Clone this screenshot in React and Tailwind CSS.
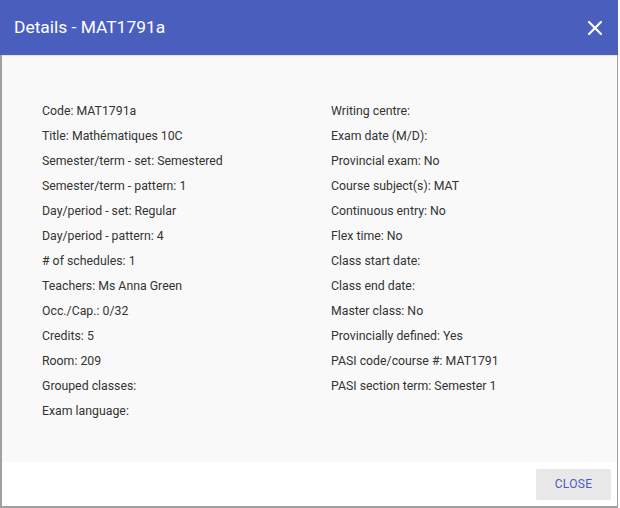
export default function App() {
  const left = [
    "Code: MAT1791a",
    "Title: Mathématiques 10C",
    "Semester/term - set: Semestered",
    "Semester/term - pattern: 1",
    "Day/period - set: Regular",
    "Day/period - pattern: 4",
    "# of schedules: 1",
    "Teachers: Ms Anna Green",
    "Occ./Cap.: 0/32",
    "Credits: 5",
    "Room: 209",
    "Grouped classes:",
    "Exam language:",
  ];
  const right = [
    "Writing centre:",
    "Exam date (M/D):",
    "Provincial exam: No",
    "Course subject(s): MAT",
    "Continuous entry: No",
    "Flex time: No",
    "Class start date:",
    "Class end date:",
    "Master class: No",
    "Provincially defined: Yes",
    "PASI code/course #: MAT1791",
    "PASI section term: Semester 1",
  ];
  return (
    <div className="w-[620px] h-[508px] bg-white" style={{ fontFamily: "Roboto, 'Liberation Sans', sans-serif" }}>
      <div className="w-[618px] h-[508px] flex flex-col border-l-2 border-r border-b-2 border-[#a0a0a0] bg-white">
        <div className="h-[55px] -ml-[2px] w-[618px] bg-[#4a5ebe] flex items-center justify-between pl-[14px] pr-[16px] shrink-0">
          <span className="text-white text-[17.4px]">Details - MAT1791a</span>
          <svg width="14" height="14" viewBox="0 0 14 14">
            <path d="M1 1 L13 13 M13 1 L1 13" stroke="white" strokeWidth="2.2" strokeLinecap="square" />
          </svg>
        </div>
        <div className="h-[407px] bg-[#f9f9f9] border-t border-[#e4e6ee] shrink-0 pl-[40px] pt-[43px] flex text-[12.3px] text-[#333]">
          <div className="w-[289px] flex flex-col">
            {left.map((t) => (
              <div key={t} className="h-[25px] leading-[25px]">{t}</div>
            ))}
          </div>
          <div className="flex flex-col">
            {right.map((t) => (
              <div key={t} className="h-[25px] leading-[25px]">{t}</div>
            ))}
          </div>
        </div>
        <div className="flex-1 flex items-center justify-end pr-[6px]">
          <button className="w-[75px] h-[31px] bg-[#e8e8e8] rounded-[2px] text-[12px] text-[#4a5ebe] tracking-[0.3px]">
            CLOSE
          </button>
        </div>
      </div>
    </div>
  );
}
